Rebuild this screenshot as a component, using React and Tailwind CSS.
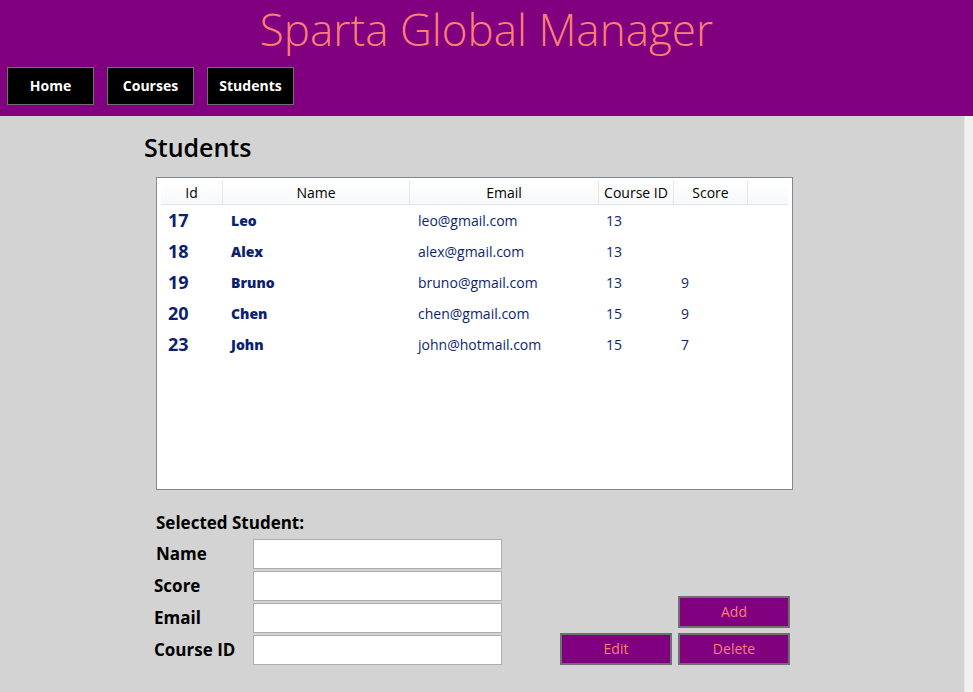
import React from "react";

const rows = [
  { id: 17, name: "Leo", email: "leo@gmail.com", course: "13", score: "" },
  { id: 18, name: "Alex", email: "alex@gmail.com", course: "13", score: "" },
  { id: 19, name: "Bruno", email: "bruno@gmail.com", course: "13", score: "9" },
  { id: 20, name: "Chen", email: "chen@gmail.com", course: "15", score: "9" },
  { id: 23, name: "John", email: "john@hotmail.com", course: "15", score: "7" },
];

const font = { fontFamily: '"Open Sans", "Noto Sans", sans-serif' };

function NavButton({ children }) {
  return (
    <button className="w-[87px] h-[38px] bg-black border border-[#707070] text-white font-bold text-[14px] leading-none">
      {children}
    </button>
  );
}

function ActionButton({ children }) {
  return (
    <button className="w-[112px] h-[32px] bg-[#800080] border-2 border-[#707070] text-[#fa8072] text-[14px] leading-none">
      {children}
    </button>
  );
}

function Field({ label, className }) {
  return (
    <div className="flex items-center h-[32px]">
      <div className={"w-[109px] text-[17px] font-bold text-black " + className}>{label}</div>
      <div className="w-[249px] h-[30px] bg-white border border-[#abadb3]" />
    </div>
  );
}

export default function App() {
  return (
    <div className="w-[973px] h-[692px] flex flex-col bg-[#d3d3d3] overflow-hidden" style={font}>
      <header className="h-[116px] bg-[#800080] flex flex-col shrink-0">
        <h1 className="text-[44px] font-light text-[#fa8072] text-center leading-none pt-[7px] h-[67px]">
          Sparta Global Manager
        </h1>
        <nav className="flex gap-[13px] pl-[7px]">
          <NavButton>Home</NavButton>
          <NavButton>Courses</NavButton>
          <NavButton>Students</NavButton>
        </nav>
      </header>
      <div className="flex flex-1 min-h-0">
        <main className="flex-1 pl-[144px] flex flex-col">
          <h2 className="text-[25px] font-semibold text-black leading-none mt-[19px] h-[42px]">Students</h2>
          <div className="ml-[12px] w-[637px] h-[313px] bg-white border border-[#828790] px-[4px] pt-[3px]">
            <div className="grid grid-cols-[62px_187px_189px_75px_74px_1fr] h-[24px] border-b border-[#e5e5e5] text-[14px] text-black bg-gradient-to-b from-white to-[#f7f8fa]">
              {["Id", "Name", "Email", "Course ID", "Score", ""].map((h, i) => (
                <div key={i} className={"flex items-center justify-center " + (i < 5 ? "border-r border-[#e5e5e5]" : "")}>
                  {h}
                </div>
              ))}
            </div>
            {rows.map((r) => (
              <div key={r.id} className="grid grid-cols-[62px_187px_189px_75px_74px_1fr] h-[31px] items-center text-[#0d1f6e]">
                <div className="pl-[7px] text-[18px] font-bold">{r.id}</div>
                <div className="pl-[8px] text-[14px] font-extrabold">{r.name}</div>
                <div className="pl-[8px] text-[14px]">{r.email}</div>
                <div className="pl-[7px] text-[14px]">{r.course}</div>
                <div className="pl-[7px] text-[14px]">{r.score}</div>
                <div />
              </div>
            ))}
          </div>
          <div className="flex mt-[17px]">
            <div className="flex flex-col">
              <div className="pl-[12px] text-[17px] font-bold h-[31px] flex items-center w-[160px] overflow-hidden whitespace-nowrap">
                Selected Student:
              </div>
              <Field label="Name" className="pl-[12px]" />
              <Field label="Score" className="pl-[10px]" />
              <Field label="Email" className="pl-[10px]" />
              <Field label="Course ID" className="pl-[10px]" />
            </div>
            <div className="flex items-end gap-[6px] ml-[58px] pb-[1px]">
              <ActionButton>Edit</ActionButton>
              <div className="flex flex-col gap-[5px]">
                <ActionButton>Add</ActionButton>
                <ActionButton>Delete</ActionButton>
              </div>
            </div>
          </div>
        </main>
        <div className="w-[9px] bg-[#f0f0f0] border-l border-[#e6e6e6]" />
      </div>
    </div>
  );
}
